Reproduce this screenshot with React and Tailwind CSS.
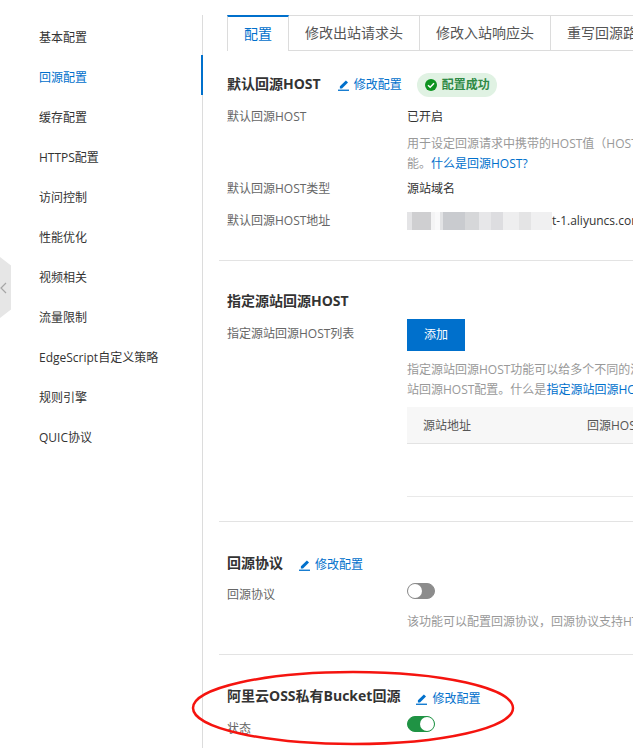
import React from "react";

const menu = ["基本配置", "回源配置", "缓存配置", "HTTPS配置", "访问控制", "性能优化", "视频相关", "流量限制", "EdgeScript自定义策略", "规则引擎", "QUIC协议"];
const tabs = ["修改出站请求头", "修改入站响应头", "重写回源路径"];
const blur = ["w-[5px] bg-[#e4e4e6]", "w-[19px] bg-[#cfcfd1]", "w-[4px] bg-[#f4f4f5]", "w-[5px] bg-[#f9f9fa]", "w-[3px] bg-[#e2e3e5]", "w-[22px] bg-[#c9cbcf]", "w-[14px] bg-[#d6d7d9]", "w-[12px] bg-[#e7e7e9]", "w-[12px] bg-[#dddde0]", "w-[16px] bg-[#eeeeef]", "w-[12px] bg-[#e4e4e5]", "w-[21px] bg-[#f0f0f1]"];

function EditLink({ className = "" }) {
  return (
    <a className={`flex items-center text-xs text-[#0070cc] ${className}`}>
      <svg width="11" height="11" viewBox="0 0 11 11" className="mr-[5px]" fill="#0070cc">
        <path d="M7.9 0.4 10 2.5 4 8.4H1.9V6.3Z" />
        <rect x="0" y="9.6" width="11" height="1.3" />
      </svg>
      修改配置
    </a>
  );
}

function Toggle({ on }) {
  return (
    <div className={`flex h-4 w-7 rounded-full border ${on ? "justify-end border-[#1f9344] bg-[#1f9344]" : "justify-start border-[#8c8c8c] bg-[#8c8c8c]"}`}>
      <div className="h-[14px] w-[14px] rounded-full bg-white" />
    </div>
  );
}

function Title({ children, className = "" }) {
  return <h3 className={`whitespace-nowrap text-sm font-bold leading-5 text-[#333] ${className}`}>{children}</h3>;
}

function Row({ label, children, className = "" }) {
  return (
    <div className={`flex text-xs leading-5 ${className}`}>
      <div className="w-[180px] shrink-0 text-[#666]">{label}</div>
      <div className="min-w-0 flex-1 whitespace-nowrap text-[#333]">{children}</div>
    </div>
  );
}

export default function App() {
  return (
    <div className="relative flex h-[748px] w-[633px] overflow-hidden bg-white font-['Open_Sans','Noto_Sans_CJK_SC',sans-serif]">
      {/* left menu */}
      <aside className="w-[203px] shrink-0 pt-[15px]">
        <div className="h-full border-r border-[#dcdcdc]">
          {menu.map((item, i) => (
            <div
              key={item}
              className={`-mr-px flex h-10 items-center whitespace-nowrap pl-[39px] pt-[6px] text-xs ${i === 1 ? "border-r-2 border-[#0070cc] text-[#0070cc]" : "text-[#333]"}`}
            >
              {item}
            </div>
          ))}
        </div>
      </aside>

      {/* collapse handle */}
      <div className="absolute left-0 top-[257px] flex h-[61px] w-[11px] items-center bg-[#e6e6e6] [clip-path:polygon(0_0,100%_14%,100%_86%,0_100%)]">
        <svg width="7" height="12" viewBox="0 0 7 12" fill="none" stroke="#a6a6a6" strokeWidth="1.2">
          <path d="M6 1 1 6l5 5" />
        </svg>
      </div>

      <main className="min-w-0 flex-1 pl-4 pt-[15px]">
        <div className="flex h-9 pl-2 text-sm">
          <div className="flex w-[62px] shrink-0 items-center justify-center border-l border-t-2 border-r border-[#dcdcdc] border-t-[#0070cc] text-[#0070cc]">配置</div>
          {tabs.map((tab) => (
            <div key={tab} className="flex shrink-0 items-center whitespace-nowrap border-y border-r border-[#dcdcdc] px-4 text-[#555]">
              {tab}
            </div>
          ))}
        </div>

        {/* default host */}
        <section className="h-[210px] border-b border-[#e3e3e3] pl-2 pt-[22px]">
          <div className="flex items-center">
            <Title className="-mt-[2px]">默认回源HOST</Title>
            <EditLink className="ml-[17px]" />
            <span className="ml-[15px] flex h-6 w-20 items-center rounded-full bg-[#e0f2e3] pl-2 text-xs font-semibold text-[#2f8a45]">
              <svg width="12" height="12" viewBox="0 0 12 12" className="mr-[5px]">
                <circle cx="6" cy="6" r="6" fill="#0d9320" />
                <path d="M3 6.2 5.2 8.2 9 4.2" fill="none" stroke="#fff" strokeWidth="1.5" />
              </svg>
              配置成功
            </span>
          </div>
          <Row label="默认回源HOST" className="mt-[10px]">已开启</Row>
          <div className="ml-[180px] mt-[7px] whitespace-nowrap text-xs leading-5 text-[#999]">
            <p>用于设定回源请求中携带的HOST值（HOST头部字段），可以修改回源HOST功</p>
            <p>能。<a className="text-[#0070cc]">什么是回源HOST?</a></p>
          </div>
          <Row label="默认回源HOST类型" className="mt-[5px]">源站域名</Row>
          <Row label="默认回源HOST地址" className="mt-3">
            <span className="flex items-center">
              <span className="flex h-[18px] shrink-0">
                {blur.map((cls) => <span key={cls} className={cls} />)}
              </span>
              <span>t-1.aliyuncs.com</span>
            </span>
          </Row>
        </section>

        {/* origin host list */}
        <section className="h-[261px] border-b border-[#e3e3e3] pl-2 pt-[30px]">
          <Title>指定源站回源HOST</Title>
          <div className="mt-2 flex text-xs">
            <div className="w-[180px] shrink-0 pt-[5px] leading-5 text-[#666]">指定源站回源HOST列表</div>
            <div className="min-w-0 flex-1 whitespace-nowrap">
              <button className="h-8 w-[58px] bg-[#0070cc] text-xs text-white">添加</button>
              <div className="mt-[9px] leading-5 text-[#999]">
                <p>指定源站回源HOST功能可以给多个不同的源站配置不同的</p>
                <p>站回源HOST配置。什么是<a className="text-[#0070cc]">指定源站回源HOST</a></p>
              </div>
              <div className="mt-[7px] flex h-[37px] items-center border-b border-[#e3e3e3] bg-[#f7f7f7] pt-[2px] text-[#555]">
                <span className="w-[180px] shrink-0 pl-4">源站地址</span>
                <span>回源HOST</span>
              </div>
              <div className="h-[53px] border-b border-[#e9e9e9]" />
            </div>
          </div>
        </section>

        {/* protocol */}
        <section className="h-[133px] border-b border-[#e3e3e3] pl-2 pt-[31px]">
          <div className="flex items-center">
            <Title>回源协议</Title>
            <EditLink className="ml-[16px] translate-y-[2px]" />
          </div>
          <Row label="回源协议" className="mt-3">
            <div className="-mt-[2px]"><Toggle /></div>
          </Row>
          <p className="ml-[180px] mt-[7px] whitespace-nowrap text-xs leading-5 text-[#999]">该功能可以配置回源协议，回源协议支持HTTP、HTTPS</p>
        </section>

        {/* oss bucket */}
        <section className="pl-2 pt-[31px]">
          <div className="flex items-center">
            <Title>阿里云OSS私有Bucket回源</Title>
            <EditLink className="ml-[16px] translate-y-[3px]" />
          </div>
          <Row label="状态" className="mt-[13px]">
            <div className="-mt-[3px]"><Toggle on /></div>
          </Row>
        </section>
      </main>

      {/* hand-drawn annotation */}
      <svg width="633" height="748" className="pointer-events-none absolute left-0 top-0" fill="none">
        <ellipse cx="353" cy="708" rx="160" ry="36" stroke="#f5140f" strokeWidth="2.5" />
      </svg>
    </div>
  );
}
